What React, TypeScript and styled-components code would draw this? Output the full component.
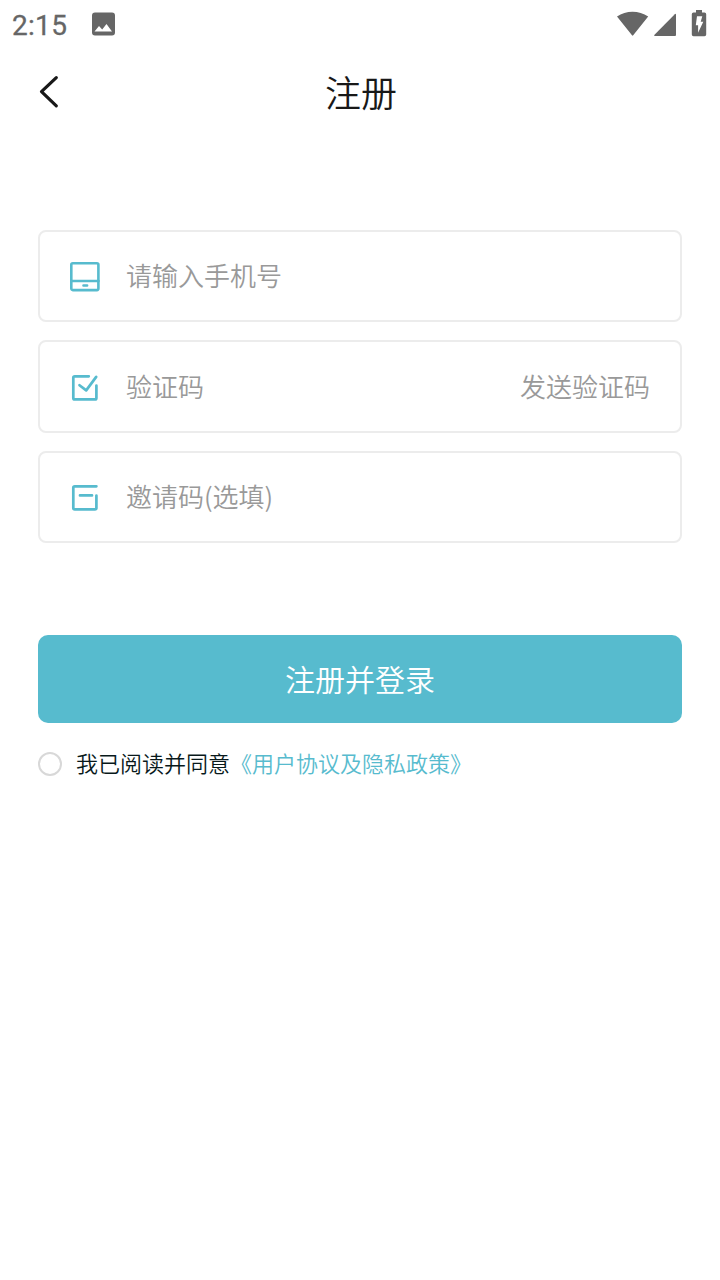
import React from "react";
import styled, { createGlobalStyle } from "styled-components";

const TEAL = "#57bbce";
const STATUS = "#666666";

const GlobalStyle = createGlobalStyle`
  * { box-sizing: border-box; }
  body { margin: 0; background: #fff; }
  button, input { font: inherit; }
`;

const Screen = styled.div`
  display: flex;
  flex-direction: column;
  width: 720px;
  height: 1280px;
  overflow: hidden;
  background: #fff;
  font-family: "Noto Sans CJK SC", sans-serif;
  font-weight: 350;
`;

const StatusBar = styled.div`
  display: flex;
  align-items: center;
  flex: none;
  height: 48px;
  padding: 0 12px;
`;

const Clock = styled.span`
  width: 79.5px;
  padding-top: 3px;
  font: 400 28px/32px Roboto, sans-serif;
  letter-spacing: 0.3px;
  color: ${STATUS};
  -webkit-text-stroke: 0.3px ${STATUS};
`;

const StatusIcons = styled.svg`
  margin-left: auto;
`;

const Header = styled.header`
  display: grid;
  grid-template-columns: 100px 1fr 100px;
  align-items: center;
  flex: none;
  height: 88px;
`;

const BackButton = styled.button`
  display: flex;
  padding: 0 0 0 38px;
  border: 0;
  background: none;
`;

const Title = styled.h1`
  margin: 0;
  padding: 0 0 2px 2px;
  text-align: center;
  font-size: 36px;
  line-height: 52px;
  font-weight: 350;
  color: #181818;
`;

const Form = styled.form`
  display: flex;
  flex-direction: column;
  padding: 94px 38px 0;
`;

const Field = styled.label<{ $tall?: boolean }>`
  display: flex;
  align-items: center;
  height: ${({ $tall }) => ($tall ? 93 : 92)}px;
  margin-bottom: 18px;
  padding: ${({ $tall }) => ($tall ? 1 : 0)}px 30px 0 28px;
  border: 2px solid #ececec;
  border-radius: 8px;
`;

const FieldIcon = styled.svg`
  flex: none;
  margin-right: 24px;
  fill: none;
  stroke: ${TEAL};
  stroke-linecap: round;
  stroke-linejoin: round;
`;

const Placeholder = styled.span`
  flex: 1;
  padding-bottom: 2px;
  font-size: 26px;
  line-height: 38px;
  color: #999;
`;

const SendCode = styled.button`
  padding: 0 0 2px;
  border: 0;
  background: none;
  font-size: 26px;
  line-height: 38px;
  color: #999;
`;

const Submit = styled.button`
  height: 88px;
  margin-top: 74px;
  padding: 0 0 2px;
  border: 0;
  border-radius: 10px;
  background: ${TEAL};
  font-size: 30px;
  line-height: 44px;
  color: #fff;
`;

const Agreement = styled.div`
  display: flex;
  align-items: center;
  height: 32px;
  margin-top: 25px;
  font-size: 22px;
  line-height: 32px;
  color: #08191b;
`;

const Radio = styled.span`
  width: 24px;
  height: 24px;
  margin-right: 14px;
  border: 2px solid #d8d8d8;
  border-radius: 50%;
`;

const Terms = styled.span`
  padding-bottom: 4px;
`;

const Policy = styled.a`
  color: ${TEAL};
`;

export default function App() {
  return (
    <Screen>
      <GlobalStyle />
      <StatusBar>
        <Clock>2:15</Clock>
        <svg width="23" height="24" viewBox="0 0 23 24" fill={STATUS}>
          <path
            fillRule="evenodd"
            d="M3 .5h17a3 3 0 0 1 3 3v17a3 3 0 0 1-3 3H3a3 3 0 0 1-3-3v-17a3 3 0 0 1 3-3ZM2.5 19.5h17.500l-5.500-7.500-4.300 5.600-3.200-3.600Z"
          />
        </svg>
        <StatusIcons width="91" height="28" viewBox="617 10 91 28" fill={STATUS}>
          <path d="M617 16.500C626 10 639 10 648.200 16.500L633.200 35.300q-.6.8-1.200 0Z" />
          <path d="M674.800 14.300q1.200-1.100 1.200.5V35q0 1-1 1H655q-1.600 0-.5-1.200Z" />
          <path
            fillRule="evenodd"
            d="M696 10h6v2.500h2.500a1.700 1.700 0 0 1 1.700 1.700v20.300a1.700 1.700 0 0 1-1.700 1.700h-11a1.700 1.700 0 0 1-1.700-1.700v-20.300a1.700 1.700 0 0 1 1.700-1.700h2.500ZM697 16.300h5.300l-1.600 5.400h2.600l-5.200 11v-7.500h-2.300Z"
          />
        </StatusIcons>
      </StatusBar>
      <Header>
        <BackButton type="button" aria-label="返回">
          <svg width="22" height="36" viewBox="0 0 22 36" fill="none" stroke="#181818" strokeWidth="3.2" strokeLinecap="round" strokeLinejoin="round">
            <path d="M18.300 3.600 3.500 17.700 18.300 31.900" />
          </svg>
        </BackButton>
        <Title>注册</Title>
      </Header>
      <Form>
        <Field>
          <FieldIcon width="34" height="34" viewBox="0 0 34 34" strokeWidth="2.6">
            <rect x="3.300" y="4.300" width="27.100" height="26.800" rx="1.500" />
            <path d="M3.500 22h27M15.500 26.500h3.600" />
          </FieldIcon>
          <Placeholder>请输入手机号</Placeholder>
        </Field>
        <Field $tall>
          <FieldIcon width="34" height="34" viewBox="0 0 34 34" strokeWidth="2.7">
            <path d="M20.800 6.300H6.800q-1.500 0-1.500 1.500v20.100q0 1.500 1.500 1.500h20.100q1.500 0 1.500-1.500V15.500M11.500 15.200l6.700 5.200 10-13.500" />
          </FieldIcon>
          <Placeholder>验证码</Placeholder>
          <SendCode type="button">发送验证码</SendCode>
        </Field>
        <Field>
          <FieldIcon width="34" height="34" viewBox="0 0 34 34" strokeWidth="2.7">
            <path d="M28.400 6.300H6.800q-1.500 0-1.500 1.500v20.100q0 1.500 1.500 1.500h20.100q1.500 0 1.500-1.500V15.500M12 15.400h12" />
          </FieldIcon>
          <Placeholder>邀请码(选填)</Placeholder>
        </Field>
        <Submit type="button">注册并登录</Submit>
        <Agreement>
          <Radio />
          <Terms>
            我已阅读并同意<Policy>《用户协议及隐私政策》</Policy>
          </Terms>
        </Agreement>
      </Form>
    </Screen>
  );
}
